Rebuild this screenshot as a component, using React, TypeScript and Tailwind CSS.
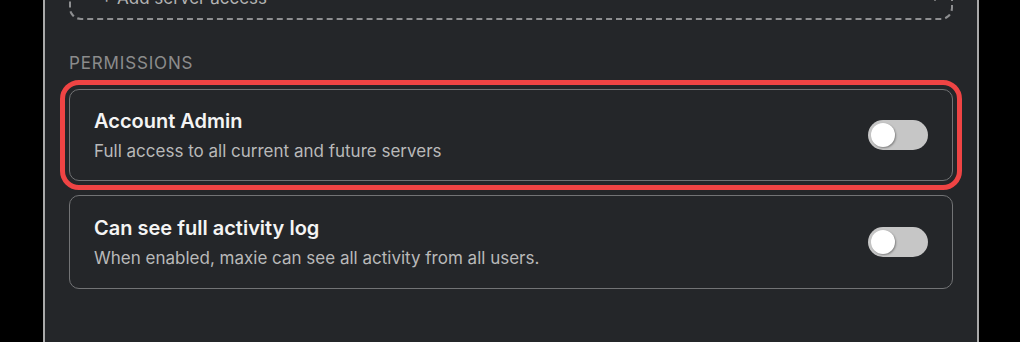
import React from 'react';
import { ChevronDown } from 'lucide-react';

/**
 * One permission row: title, description and a switch on the right.
 */
interface PermissionRowProps {
  title: string;
  description: string;
  highlighted?: boolean;
}

const Toggle: React.FC = () => (
  <div className="relative h-[30px] w-[60px] shrink-0 rounded-full bg-[#c6c6c6]">
    <div className="absolute left-[3px] top-[3px] h-[24px] w-[24px] rounded-full bg-white shadow-[1px_1px_2px_rgba(0,0,0,0.35)]" />
  </div>
);

const PermissionRow: React.FC<PermissionRowProps> = ({ title, description, highlighted }) => (
  <div
    className={
      highlighted
        ? 'flex items-center justify-between rounded-[10px] border border-[#727375] px-6 py-[17px] outline-[5px] outline-offset-[4px] outline-[#ef4444] outline-solid'
        : 'flex items-center justify-between rounded-[10px] border border-[#727375] px-6 py-[18px]'
    }
  >
    <div className="flex flex-col">
      <span className="text-[20px] font-semibold leading-[28px] text-[#f4f4f4]">{title}</span>
      <span className="mt-[4px] text-[17px] leading-[24px] text-[#b9b9b9]">{description}</span>
    </div>
    <Toggle />
  </div>
);

export default function App() {
  return (
    <div className="h-[342px] w-[1020px] overflow-hidden bg-black" style={{ fontFamily: 'Inter, "Noto Sans", sans-serif' }}>
      <div className="ml-[43px] flex h-[342px] w-[936px] flex-col border-x-2 border-[#a9a9a9] bg-[#242629] px-6">
        {/* Add server access button, scrolled mostly out of view */}
        <div className="-mt-[28px] flex h-[48px] shrink-0 items-center justify-between rounded-xl border-2 border-dashed border-[#8e8f91] pl-[30px] pr-[8px]">
          <span className="mt-[5px] text-[17px] text-[#b3b3b3]">+ Add server access</span>
          <ChevronDown size={16} className="mt-[3px] text-[#d0d0d0]" />
        </div>

        <div className="mt-[31px] text-[17px] uppercase leading-[24px] tracking-[0.05em] text-[#8c8c8c]">Permissions</div>

        <div className="mt-[14px] flex flex-col gap-[14px]">
          <PermissionRow
            highlighted
            title="Account Admin"
            description="Full access to all current and future servers"
          />
          <PermissionRow
            title="Can see full activity log"
            description="When enabled, maxie can see all activity from all users."
          />
        </div>
      </div>
    </div>
  );
}
